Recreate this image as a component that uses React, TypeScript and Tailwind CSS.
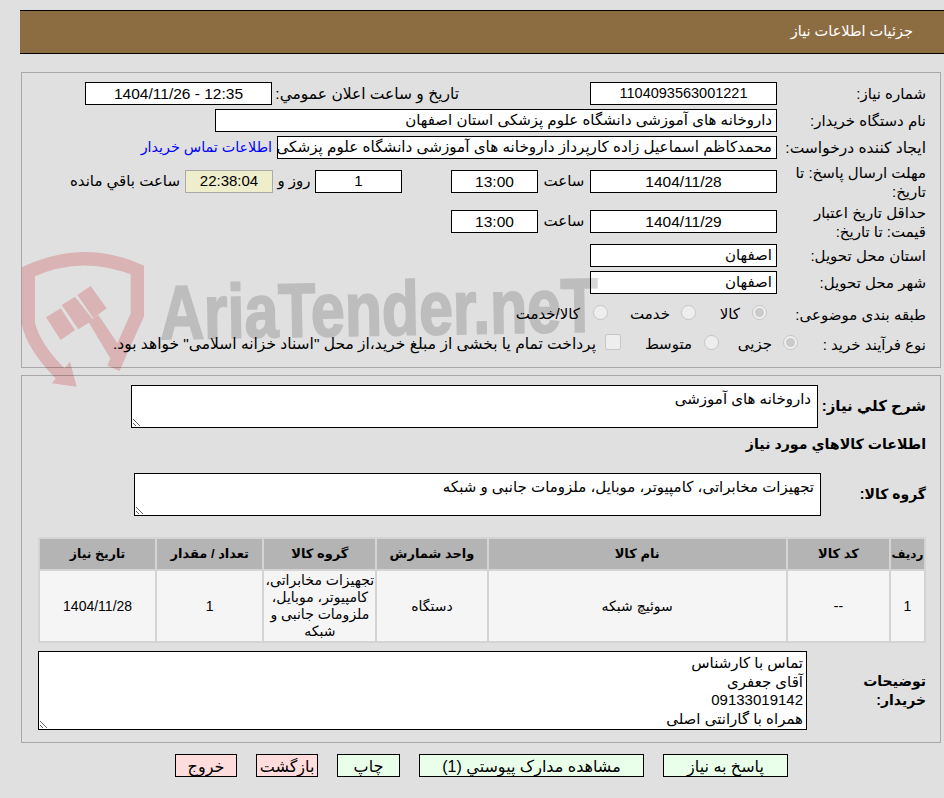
const font = "font-['Liberation_Sans','DejaVu_Sans',sans-serif]";

function Box({ className, tone = "bg-white border-black", children }: { className: string; tone?: string; children?: React.ReactNode }) {
    return (
        <div className={"h-[23px] shrink-0 border flex items-center whitespace-nowrap overflow-hidden " + tone + " " + className}>
            {children}
        </div>
    )
}

function Label({ w, children }: { w: string; children: React.ReactNode }) {
    return <div className={"shrink-0 pr-[14px] pl-[12px] leading-[19px] " + w}>{children}</div>
}

function Radio({ checked, className = "" }: { checked?: boolean; className?: string }) {
    return <input type="radio" disabled defaultChecked={checked} className={"ml-0 mt-0 mb-[4px] w-[15px] h-[15px] shrink-0 " + className} />
}

function App() {
    const cols = [
        { title: "ردیف", value: "1", w: "w-[33px] text-[12px]" },
        { title: "کد کالا", value: "--", w: "w-[101px] text-[13px]" },
        { title: "نام کالا", value: "سوئیچ شبکه", w: "w-[297px] text-[13px]" },
        { title: "واحد شمارش", value: "دستگاه", w: "w-[109px] text-[13px]" },
        { title: "گروه کالا", value: "تجهیزات مخابراتی، کامپیوتر، موبایل، ملزومات جانبی و شبکه", w: "w-[111px] text-[13px]" },
        { title: "تعداد / مقدار", value: "1", w: "w-[105px] text-[13px]" },
        { title: "تاریخ نیاز", value: "1404/11/28", w: "w-[115px] text-[12.5px]" },
    ]

    return (
        <div dir="rtl" className={"relative w-[944px] h-[798px] overflow-hidden bg-[#e0e0e0] text-black text-[15px] " + font}>
            <div className="ml-[20px] mt-[10px] h-[44px] bg-[#8c6d42] border-y border-black flex items-center pr-[31px] text-white text-[14.5px]">
                جزئیات اطلاعات نیاز
            </div>

            <div className="ml-[21px] mr-[3px] mt-[18px] h-[296px] border border-[#a8a8a8] pt-[9px]">
                <div className="flex items-center h-[23px]">
                    <Label w="w-[163px]">شماره نیاز:</Label>
                    <Box className="w-[187px] justify-center text-[14.5px]">1104093563001221</Box>
                    <div className="mr-[131px] w-[187px] whitespace-nowrap text-[15.5px]">تاریخ و ساعت اعلان عمومي:</div>
                    <Box className="w-[187px] justify-center text-[15.5px]">12:35 - 1404/11/26</Box>
                </div>
                <div className="flex items-center h-[23px] mt-[4px]">
                    <Label w="w-[163px]">نام دستگاه خریدار:</Label>
                    <Box className="w-[562px] pr-[4px]">داروخانه های آموزشی دانشگاه علوم پزشکی استان اصفهان</Box>
                </div>
                <div className="flex items-center h-[23px] mt-[4px]">
                    <Label w="w-[163px]"><span className="text-[15.5px] whitespace-nowrap">ایجاد کننده درخواست:</span></Label>
                    <Box className="w-[500px] pr-[4px] text-[15.2px]">محمدکاظم اسماعیل زاده کارپرداز داروخانه های آموزشی دانشگاه علوم پزشکی</Box>
                    <a href="#" className="mr-[5px] text-[#0000ff] whitespace-nowrap text-[14.3px]">اطلاعات تماس خریدار</a>
                </div>
                <div className="flex items-center h-[23px] mt-[11px]">
                    <Label w="w-[163px]">مهلت ارسال پاسخ: تا تاریخ:</Label>
                    <Box className="w-[187px] justify-center text-[15.5px]">1404/11/28</Box>
                    <div className="w-[52px] text-center">ساعت</div>
                    <Box className="w-[87px] justify-center text-[15.5px]">13:00</Box>
                    <div className="w-[49px]" />
                    <Box className="w-[87px] justify-center">1</Box>
                    <div className="w-[42px] text-center whitespace-nowrap">روز و</div>
                    <Box className="w-[88px] justify-center" tone="bg-[#eeeecc] border-[#aaaaaa]">22:38:04</Box>
                    <div className="mr-[5px] whitespace-nowrap">ساعت باقي مانده</div>
                </div>
                <div className="flex items-center h-[23px] mt-[17px]">
                    <Label w="w-[163px]">حداقل تاریخ اعتبار قیمت: تا تاریخ:</Label>
                    <Box className="w-[187px] justify-center text-[15.5px]">1404/11/29</Box>
                    <div className="w-[52px] text-center">ساعت</div>
                    <Box className="w-[87px] justify-center text-[15.5px]">13:00</Box>
                </div>
                <div className="flex items-center h-[23px] mt-[11px]">
                    <Label w="w-[163px]">استان محل تحویل:</Label>
                    <Box className="w-[187px] pr-[4px]">اصفهان</Box>
                </div>
                <div className="flex items-center h-[23px] mt-[4px]">
                    <Label w="w-[163px]">شهر محل تحویل:</Label>
                    <Box className="w-[187px] pr-[4px]">اصفهان</Box>
                </div>
                <div className="flex items-center mt-[8px] h-[24px] whitespace-nowrap">
                    <Label w="w-[163px]">طبقه بندی موضوعی:</Label>
                    <Radio checked className="mr-[10px]" />
                    <span className="mr-[12px] w-[20px]">کالا</span>
                    <Radio className="mr-[24px]" />
                    <span className="mr-[11px] w-[40px]">خدمت</span>
                    <Radio className="mr-[22px]" />
                    <span className="mr-[13px] w-[66px]">کالا/خدمت</span>
                </div>
                <div className="flex items-center mt-[6px] h-[24px] whitespace-nowrap">
                    <Label w="w-[142px]">نوع فرآیند خرید :</Label>
                    <Radio checked />
                    <span className="mr-[11px] w-[35px]">جزیی</span>
                    <Radio className="mr-[18px]" />
                    <span className="mr-[12px] w-[46px]">متوسط</span>
                    <input type="checkbox" disabled className="mr-[25px] ml-0 mt-0 mb-[4px] w-[16px] h-[16px] shrink-0" />
                    <span className="mr-[9px] text-[15.5px]">پرداخت تمام یا بخشی از مبلغ خرید،از محل "اسناد خزانه اسلامی" خواهد بود.</span>
                </div>
            </div>

            <div className="ml-[21px] mr-[3px] mt-[7px] h-[368px] border border-[#a8a8a8] pt-[9px]">
                <div className="flex items-center">
                    <div className="w-[122px] shrink-0 pr-[14px] font-bold whitespace-nowrap">شرح كلي نياز:</div>
                    <textarea readOnly defaultValue="داروخانه های آموزشی" className="w-[687px] h-[43px] border border-black bg-white px-[6px] py-[2px] outline-none" />
                </div>
                <div className="mt-[6px] h-[20px] pr-[14px] font-bold text-[14.2px]">اطلاعات کالاهاي مورد نياز</div>
                <div className="flex items-center mt-[19px]">
                    <div className="w-[119px] shrink-0 pr-[14px] font-bold text-[14px]">گروه کالا:</div>
                    <textarea readOnly defaultValue="تجهیزات مخابراتی، کامپیوتر، موبایل، ملزومات جانبی و شبکه" className="w-[687px] h-[43px] border border-black bg-white px-[6px] py-[2px] outline-none" />
                </div>
                <table className="mt-[21px] mr-[14px] w-[888px] table-fixed border-separate border-spacing-[2px] bg-[#d4d4d4] text-center text-[14.5px]">
                    <thead>
                        <tr>
                            {cols.map(c => (
                                <th key={c.title} className={"h-[30px] p-0 bg-[#b4b4b4] font-bold " + c.w}>{c.title}</th>
                            ))}
                        </tr>
                    </thead>
                    <tbody>
                        <tr>
                            {cols.map(c => (
                                <td key={c.title} className="h-[70px] p-0 bg-[#f5f5f5] text-[14px] leading-[17px]">{c.value}</td>
                            ))}
                        </tr>
                    </tbody>
                </table>
                <div className="flex items-center mt-[8px]">
                    <div className="w-[133px] shrink-0 pr-[14px] pl-[10px] font-bold text-[14px] leading-[19px]">توضیحات خریدار:</div>
                    <textarea readOnly defaultValue={"تماس با کارشناس\nآقای جعفری\n09133019142\nهمراه با گارانتی اصلی"} className="w-[769px] h-[79px] border border-black bg-white px-[3px] py-[2px] leading-[18.5px] outline-none" />
                </div>
            </div>

            <div className="mt-[11px] mr-[156px] flex gap-[19px] text-[16px]">
                <button className="w-[125px] h-[23px] border border-black bg-[#eaffea]">پاسخ به نياز</button>
                <button className="w-[225px] h-[23px] border border-black bg-[#eaffea]">مشاهده مدارک پیوستي (1)</button>
                <button className="w-[63px] h-[23px] border border-black bg-[#eaffea]">چاپ</button>
                <button className="w-[62px] h-[23px] border border-black bg-[#ffdddd]">بازگشت</button>
                <button className="w-[62px] h-[23px] border border-black bg-[#ffdddd]">خروج</button>
            </div>

            <div dir="ltr" className="absolute inset-0 pointer-events-none mix-blend-multiply">
                <svg className="absolute left-[20px] top-[240px] w-[300px] h-[150px]" viewBox="0 0 900 450">
                    <path d="M280 385 L352 225 L352 90 Q190 20 25 95 L25 250 Q40 320 125 405" fill="none" stroke="#f9cdcd" strokeWidth="40" />
                    <path d="M150 365 L170 440 L95 430 Z" fill="#f9cdcd" />
                    <path d="M78 232 L122 205 L165 270 L122 300 Z M125 195 L165 170 L220 240 L175 268 Z M172 165 L212 138 L260 205 L220 235 Z M205 245 L235 225 L310 335 L275 362 Z" fill="#f9cdcd" />
                </svg>
                <div className="absolute left-[160px] top-[267px] origin-left scale-x-[0.8] -rotate-1 text-[76px] leading-[92px] font-bold whitespace-nowrap text-[#d8d8d8] [-webkit-text-stroke:2px_#d8d8d8] font-['Liberation_Sans',sans-serif]">
                    AriaTender.neT
                </div>
            </div>
        </div>
    )
}

export default App
